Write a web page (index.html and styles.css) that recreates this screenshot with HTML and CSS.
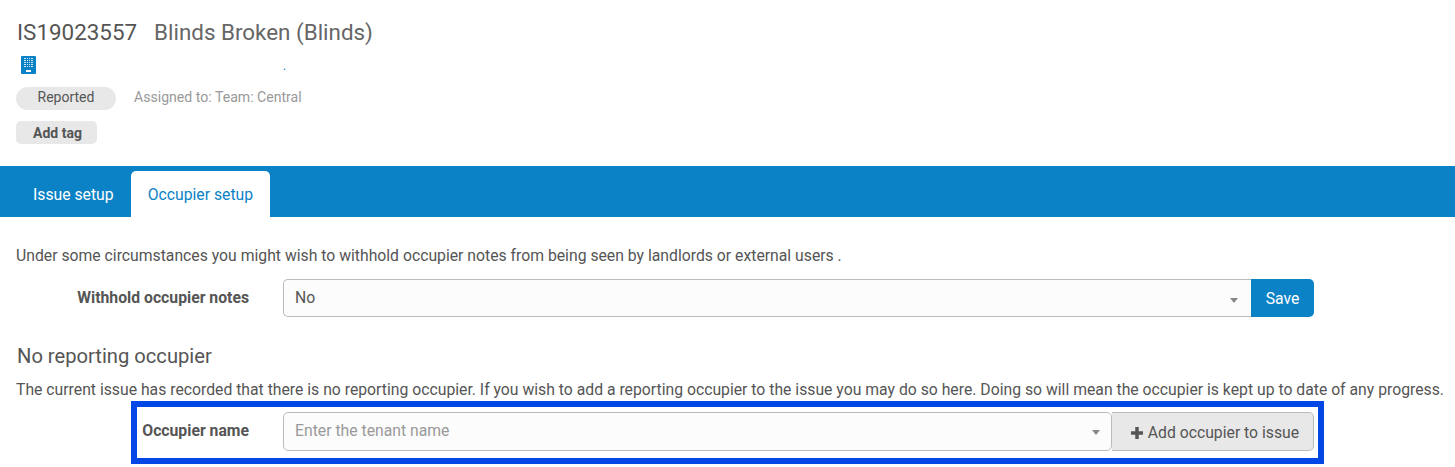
FILE: index.html
```html
<!DOCTYPE html>
<html lang="en">

<head>
    <meta http-equiv="Content-Type" content="text/html; charset=UTF-8" />
    <title>Issue IS19023557</title>
    <link rel="stylesheet" href="styles.css">
</head>

<body>
    <div class="issueHeader">
        <h1 class="issueTitle"><span class="issueRef">IS19023557</span><span class="issueName">Blinds Broken (Blinds)</span></h1>
        <div class="addressRow">
            <svg class="buildingIcon" width="15" height="18" viewBox="0 0 15 18">
                <rect width="15" height="18" rx="1" fill="#0b82c6" />
                <g fill="#cfe6f4">
                    <rect x="3" y="2" width="9" height="10" />
                </g>
                <g fill="#0b82c6">
                    <rect x="5" y="2" width="1" height="10" />
                    <rect x="7" y="2" width="1" height="10" />
                    <rect x="9" y="2" width="1" height="10" />
                    <rect x="3" y="3" width="9" height="1" />
                    <rect x="3" y="5" width="9" height="1" />
                    <rect x="3" y="7" width="9" height="1" />
                    <rect x="3" y="9" width="9" height="1" />
                    <rect x="3" y="11" width="9" height="1" />
                </g>
                <rect x="5" y="14" width="5" height="2" fill="#ffffff" />
            </svg>
            <span class="addressDot">.</span>
        </div>
        <div class="statusRow">
            <span class="statusPill">Reported</span>
            <span class="assigned">Assigned to: Team: Central</span>
        </div>
        <button class="tagButton">Add tag</button>
    </div>

    <div class="tabBar">
        <a class="tab">Issue setup</a>
        <a class="tab tabActive">Occupier setup</a>
    </div>

    <div class="content">
        <p class="intro">Under some circumstances you might wish to withhold occupier notes from being seen by landlords or external users .</p>
        <div class="formRow">
            <label class="formLabel">Withhold occupier notes</label>
            <div class="selectBox selectJoined">
                <span>No</span>
                <span class="caret"></span>
            </div>
            <button class="saveButton">Save</button>
        </div>

        <h2 class="sectionTitle">No reporting occupier</h2>
        <p class="sectionText">The current issue has recorded that there is no reporting occupier. If you wish to add a reporting occupier to the issue you may do so here. Doing so will mean the occupier is kept up to date of any progress.</p>

        <div class="highlightBox">
            <label class="formLabel">Occupier name</label>
            <div class="selectBox">
                <span class="placeholder">Enter the tenant name</span>
                <span class="caret"></span>
            </div>
            <button class="addButton">
                <svg class="plusIcon" width="12" height="12" viewBox="0 0 12 12">
                    <path d="M4.25 0h3.5v4.25H12v3.5H7.75V12h-3.5V7.75H0v-3.5h4.25z" fill="#555555" />
                </svg>
                Add occupier to issue
            </button>
        </div>
    </div>
</body>

</html>
```

FILE: styles.css
```css
html, body {
    margin: 0;
    padding: 0;
    background: #ffffff;
}
body {
    font-family: Roboto, "Liberation Sans", sans-serif;
    font-size: 14px;
    color: #555555;
    overflow: hidden;
}

.issueHeader {
    height: 166px;
    padding: 17px 0 0 16px;
    box-sizing: border-box;
}
.issueTitle {
    margin: 0;
    padding-left: 1px;
    font-size: 22.4px;
    line-height: 30px;
    font-weight: 400;
    color: #555555;
}
.issueRef {
    margin-right: 17px;
}
.issueName {
    color: #666666;
}

.addressRow {
    display: flex;
    height: 20px;
    margin-top: 9px;
    padding-left: 5px;
}
.addressDot {
    margin-left: 247px;
    line-height: 20px;
    font-size: 12px;
    color: #0b82c6;
}

.statusRow {
    display: flex;
    align-items: center;
    margin-top: 11px;
}
.statusPill {
    width: 100px;
    height: 23px;
    line-height: 21px;
    text-align: center;
    background: #e8e8e8;
    border-radius: 12px;
}
.assigned {
    margin-left: 18px;
    margin-bottom: 3px;
    font-size: 14.1px;
    color: #999999;
}

.tagButton {
    display: block;
    width: 81px;
    height: 23px;
    margin-top: 11px;
    padding: 0 0 0 2px;
    border: 0;
    border-radius: 5px;
    background: #e8e8e8;
    font-family: inherit;
    font-size: 14px;
    font-weight: 700;
    color: #555555;
}

.tabBar {
    display: flex;
    align-items: flex-end;
    height: 51px;
    padding-left: 17px;
    background: #0b82c6;
}
.tab {
    height: 46px;
    line-height: 48px;
    padding: 0 17px;
    font-size: 15.75px;
    color: #ffffff;
}
.tabActive {
    background: #ffffff;
    color: #0b82c6;
    border-radius: 5px 5px 0 0;
}
.tabBar .tab:first-child {
    padding: 0 17px 0 16px;
}

.content {
    padding: 29px 0 0 16px;
}
.intro, .sectionText {
    margin: 0;
    font-size: 15.75px;
    line-height: 20px;
    color: #555555;
    white-space: nowrap;
}

.formRow {
    display: flex;
    margin-top: 13px;
}
.formLabel {
    width: 233px;
    margin-right: 34px;
    flex: none;
    text-align: right;
    line-height: 37px;
    font-size: 15.75px;
    font-weight: 700;
    color: #555555;
}
.selectBox {
    display: flex;
    justify-content: space-between;
    align-items: center;
    box-sizing: border-box;
    height: 38px;
    padding: 0 11px 1px 11px;
    border: 1px solid #bbbbbb;
    border-radius: 5px;
    background: #fcfcfc;
    font-size: 15.75px;
}
.selectJoined {
    flex: none;
    width: 968px;
    padding-right: 13px;
    border-radius: 5px 0 0 5px;
    border-right: 0;
}
.placeholder {
    color: #999999;
}
.caret {
    width: 0;
    height: 0;
    border-left: 4px solid transparent;
    border-right: 4px solid transparent;
    border-top: 5px solid #888888;
    margin-top: 5px;
}
.saveButton {
    width: 63px;
    height: 38px;
    padding: 0;
    border: 0;
    border-radius: 0 5px 5px 0;
    background: #0b82c6;
    color: #ffffff;
    font-family: inherit;
    font-size: 15.75px;
    font-weight: 400;
}

.sectionTitle {
    margin: 26px 0 0;
    padding-left: 1px;
    font-size: 20.16px;
    line-height: 27px;
    font-weight: 400;
    color: #555555;
}
.sectionText {
    margin-top: 10px;
}

.highlightBox {
    display: flex;
    box-sizing: border-box;
    width: 1193px;
    height: 63px;
    margin: 1px 0 0 115px;
    padding: 5px 0 0 0;
    border: 6px solid #0047e6;
}
.highlightBox .formLabel {
    width: 112px;
}
.highlightBox .selectBox {
    flex: none;
    width: 829px;
    height: 39px;
    padding-bottom: 3px;
}
.addButton {
    width: 202px;
    height: 39px;
    padding: 1px 0 0 5px;
    border: 1px solid #bbbbbb;
    border-left: 0;
    border-radius: 0 5px 5px 0;
    background: #e8e8e8;
    color: #555555;
    font-family: inherit;
    font-size: 15.75px;
}
.plusIcon {
    vertical-align: -1px;
    margin-right: 1px;
}
```
